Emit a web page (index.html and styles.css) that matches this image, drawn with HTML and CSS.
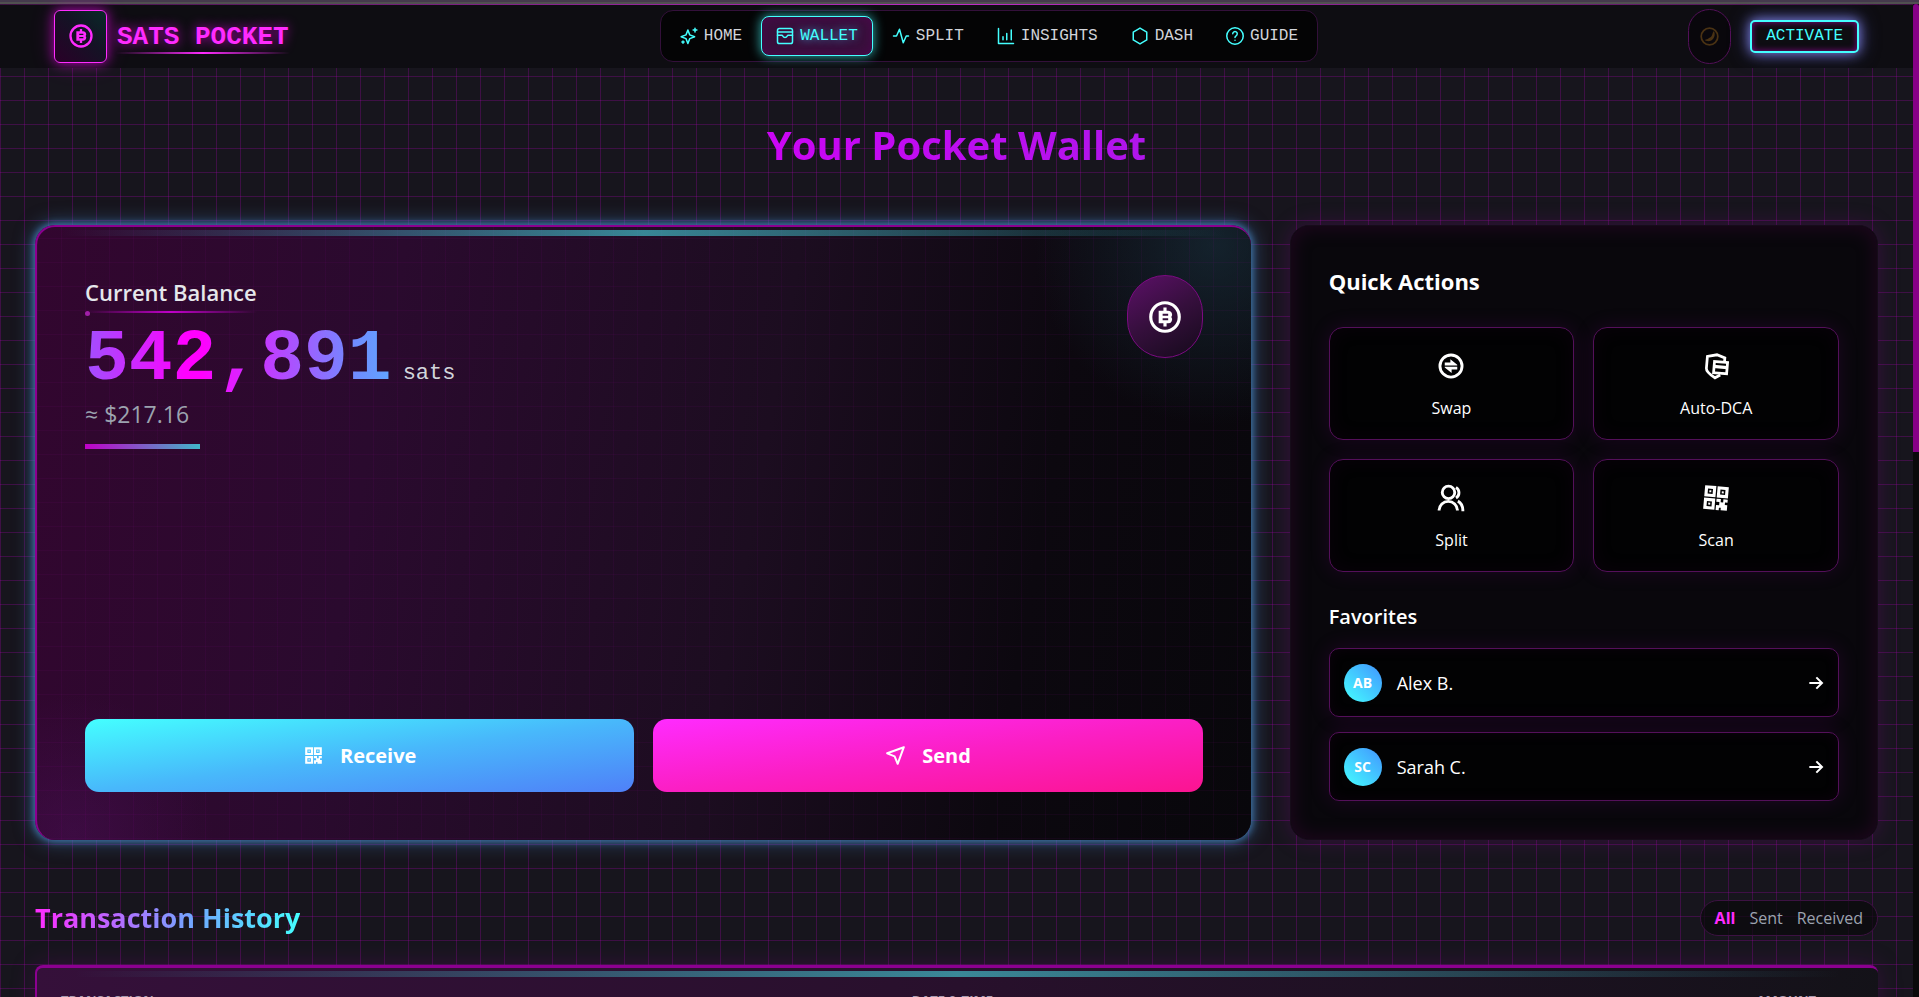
FILE: index.html
```html
<!DOCTYPE html>
<html lang="en">
<head>
<meta charset="utf-8">
<title>Sats Pocket – Wallet</title>
<link rel="stylesheet" href="styles.css">
</head>
<body>
<svg class="defs" aria-hidden="true">
  <symbol id="i-bitcoin" viewBox="0 0 24 24"><path fill="currentColor" d="M12 22a10 10 0 1 1 0-20 10 10 0 0 1 0 20zm0-2a8 8 0 1 0 0-16 8 8 0 0 0 0 16zM8 8h3V6h2v2h1a2.500 2.500 0 0 1 2 4 2.500 2.500 0 0 1-2 4h-1v2h-2v-2H8zm2.500 2v1.200H14V10zm0 2.800V14H14v-1.200z"/></symbol>
  <symbol id="i-swap" viewBox="0 0 24 24"><path fill="currentColor" d="M12 22a10 10 0 1 1 0-20 10 10 0 0 1 0 20zm0-2.300a7.700 7.700 0 1 0 0-15.400 7.700 7.700 0 0 0 0 15.400zM7 9.200h4.500V6.500l5.500 4.500v.600H7zm10 5.600h-4.500v2.700L7 13.200V12.600h10z"/></symbol>
  <symbol id="i-shield" viewBox="0 0 24 24"><g fill="none" stroke="currentColor" stroke-width="2.200"><path d="M18.500 8V5L12 3 4.500 5v9.500c0 2 3 4.500 7.500 7l4-2.600"/><path d="M10.500 8.500H21v9H10.500z"/><path stroke-width="2.500" d="M10 12.500h11"/></g></symbol>
  <symbol id="i-users" viewBox="0 0 24 24"><g fill="none" stroke="currentColor" stroke-width="2.300"><circle cx="10" cy="7.500" r="5"/><path d="M2.500 22a7.300 7.300 0 0 1 14.600 0M16 3.500a5 5 0 0 1 0 8.500M17.500 14.500c2.800 1.500 4 4 4 8"/></g></symbol>
  <symbol id="i-qr" viewBox="0 0 24 24"><path fill="currentColor" fill-rule="evenodd" d="M2.500 2.500h9v9h-9zm2.500 2.500V9H9V5zM12.500 2.500h9v9h-9zM15 5V9h4V5zM2.500 12.500h9v9h-9zM5 15v4h4v-4zM6.200 6.200H7.800V7.800H6.200zM16.200 6.200h1.600V7.800h-1.600zM6.200 16.200H7.800v1.600H6.200zM12.500 12.500H16V15h2v-2.500h3.500V15h-2v2h2v4.500h-5v-2h-1.500v2h-2.500v-4H15V15h-2.500z"/></symbol>
  <symbol id="i-send" viewBox="0 0 24 24"><path fill="none" stroke="currentColor" stroke-width="2.300" stroke-linejoin="round" d="M21.500 2.500 2.500 9.500l8.500 3.500 3.500 8.500z"/></symbol>
  <symbol id="i-arrow" viewBox="0 0 24 24"><path fill="none" stroke="currentColor" stroke-width="3" d="M2 12h19M12.500 3.500 21 12l-8.500 8.500"/></symbol>
</svg>
<div class="topstrip"></div>
<header class="header">
  <a class="brand" href="#">
    <span class="brand-box"><svg><use href="#i-bitcoin"/></svg></span>
    <span class="brand-name">SATS POCKET</span>
  </a>
  <nav class="nav">
    <a href="#"><svg viewBox="0 0 24 24"><path d="M10.500 4 13 10.500l6.500 2.500-6.500 2.500L10.500 22 8 15.500 1.500 13 8 10.500zM20 1.500v5M17.500 4h5M4 18.500v3M2.500 20h3"/></svg>HOME</a>
    <a href="#" class="active"><svg viewBox="0 0 24 24"><rect x="2" y="2" width="20" height="20" rx="2.500"/><path d="M2 6.500h20M2 11h6c1 0 1 3 4 3s3-3 4-3h6"/></svg>WALLET</a>
    <a href="#"><svg viewBox="0 0 24 24"><path d="M2 12h4L10 3l5 18 4-9h3"/></svg>SPLIT</a>
    <a href="#"><svg viewBox="0 0 24 24"><path d="M2 2v20h20M8 17v-4M13 17V8.500M19 17V4"/></svg>INSIGHTS</a>
    <a href="#"><svg viewBox="0 0 24 24"><path d="m12 1.500 9 5.200v10.600l-9 5.200-9-5.200V6.700z"/></svg>DASH</a>
    <a href="#"><svg viewBox="0 0 24 24"><circle cx="12" cy="12" r="11"/><path d="M9 9a3 3 0 1 1 4.500 2.700c-1 .6-1.500 1-1.500 2.300M12 17.500v.300"/></svg>GUIDE</a>
  </nav>
  <div class="tools">
    <button class="theme" aria-label="Toggle theme"><svg viewBox="0 0 24 24"><circle cx="12" cy="12" r="10.500" fill="none" stroke="currentColor" stroke-width="2.200"/><path fill="currentColor" d="M18 6c2.500 7-3.500 14-10.500 11.500-1.500-.600-1.200-1.500 0-1.700 2.500-.300 3-1.800 4.500-2.300 2-.700 3-2 3.500-4 .400-1.600.500-2 1-3 .400-1 1.100-1.400 1.500-.5z"/></svg></button>
    <button class="activate">ACTIVATE</button>
  </div>
</header>
<main class="main">
  <h1>Your Pocket Wallet</h1>
  <div class="grid">
    <section class="balance">
      <div class="balance-top">
        <div>
          <h2 class="label">Current Balance</h2>
          <p class="amount"><strong>542,891</strong><span>sats</span></p>
          <p class="fiat">≈ $217.16</p>
        </div>
        <span class="coin"><svg><use href="#i-bitcoin"/></svg></span>
      </div>
      <div class="cta">
        <button class="receive"><svg><use href="#i-qr"/></svg>Receive</button>
        <button class="send"><svg><use href="#i-send"/></svg>Send</button>
      </div>
    </section>
    <aside class="side">
      <h2>Quick Actions</h2>
      <div class="tiles">
        <button><svg><use href="#i-swap"/></svg>Swap</button>
        <button class="tilt"><svg><use href="#i-shield"/></svg>Auto-DCA</button>
        <button><svg><use href="#i-users"/></svg>Split</button>
        <button class="tilt"><svg><use href="#i-qr"/></svg>Scan</button>
      </div>
      <h3>Favorites</h3>
      <div class="favs">
        <button><span class="avatar">AB</span><span class="who">Alex B.</span><svg><use href="#i-arrow"/></svg></button>
        <button><span class="avatar">SC</span><span class="who">Sarah C.</span><svg><use href="#i-arrow"/></svg></button>
      </div>
    </aside>
  </div>
  <div class="history-head">
    <h2>Transaction History</h2>
    <div class="filter"><button class="on">All</button><button>Sent</button><button>Received</button></div>
  </div>
  <div class="history">
    <table>
      <thead><tr><th>TRANSACTION</th><th>DATE &amp; TIME</th><th>AMOUNT</th></tr></thead>
    </table>
  </div>
</main>
<div class="scroll"></div>
</body>
</html>
```
FILE: styles.css
```css
* { box-sizing: border-box; }
html { background: #17151d; overflow: hidden; }
body {
  position: relative;
  margin: 0;
  height: 100vh;
  overflow: hidden;
  color: #fff;
  font-family: "Open Sans", "Noto Sans", sans-serif;
  background:
    linear-gradient(90deg, rgba(176, 0, 186, .26) 1px, transparent 1px) 0 4px / 24px 24px,
    linear-gradient(rgba(176, 0, 186, .26) 1px, transparent 1px) 0 4px / 24px 24px,
    #17151d;
}
h1, h2, h3, p { margin: 0; }
button { font: inherit; color: inherit; border: 0; padding: 0; background: none; cursor: pointer; }
a { color: inherit; text-decoration: none; }
.defs { display: none; }
.topstrip { height: 4px; background: linear-gradient(#453a4d 50%, #505050 50%); }

.header {
  position: relative;
  height: 64px;
  padding: 0 60px 0 54px;
  display: flex;
  justify-content: space-between;
  align-items: center;
  background: #0e0d12;
}
.header::before {
  content: "";
  position: absolute;
  inset: 0 6px auto 0;
  height: 1px;
  background: linear-gradient(90deg, #3c1240, #c02cc8, #3c1240);
}
.brand { display: flex; align-items: center; gap: 9px; }
.brand-box {
  width: 53px;
  height: 53px;
  display: grid;
  place-items: center;
  border: 1px solid #ff2bff;
  border-radius: 6px;
  color: #ff2bff;
  background: linear-gradient(45deg, #2a0028, #151225 55%, #082a28);
  box-shadow: 0 0 12px rgba(255, 0, 255, .6), 0 0 24px rgba(255, 0, 255, .2);
}
.brand-box svg { width: 28px; height: 30px; }
.brand-name {
  position: relative;
  padding: 2px 1px 0;
  font: 700 26px/34px "Liberation Mono", monospace;
  color: #ff2bff;
  text-shadow: 0 0 12px rgba(255, 0, 255, .7);
}
.brand-name::after {
  content: "";
  position: absolute;
  left: 0; right: 0; bottom: 0;
  height: 2px;
  background: linear-gradient(90deg, transparent, #ff2bff, transparent);
}
.nav {
  height: 52px;
  padding: 0 5px;
  display: flex;
  align-items: center;
  gap: 5px;
  border: 1px solid #33103a;
  border-radius: 13px;
  background: #040405;
}
.nav a {
  height: 40px;
  padding: 0 14px;
  display: flex;
  align-items: center;
  gap: 6px;
  font: 16px "Liberation Mono", monospace;
  color: #d2d4da;
}
.nav svg { width: 18px; height: 18px; fill: none; stroke: #4ff; stroke-width: 2; stroke-linecap: round; stroke-linejoin: round; }
.nav .active {
  color: #4ff;
  border: 1px solid #4ff;
  border-radius: 8px;
  background: #380f3b;
  box-shadow: 0 0 12px rgba(68, 255, 255, .7), inset 0 0 12px rgba(90, 0, 90, .6);
  text-shadow: 0 0 8px rgba(68, 200, 255, .8);
}
.tools { display: flex; justify-content: flex-end; align-items: center; gap: 19px; }
.theme {
  width: 43px;
  height: 55px;
  display: grid;
  place-items: center;
  border: 1px solid #521058;
  border-radius: 22px;
  background: #09070c;
  color: #4a3213;
}
.theme svg { width: 19px; height: 19px; }
.activate {
  height: 33px;
  padding: 0 14px;
  border: 2px solid #4ff;
  border-radius: 5px;
  font: 16px "Liberation Mono", monospace;
  color: #4ff;
  background: #0e0d12;
  box-shadow: 0 0 12px #7a80e0, 0 0 20px rgba(110, 110, 230, .5), inset 0 0 6px rgba(255, 0, 255, .5);
}

.main { padding: 0 41px 0 35px; }
h1 {
  padding: 49px 0 52px;
  text-align: center;
  font-size: 40px;
  line-height: 56px;
  font-weight: 700;
  background: linear-gradient(90deg, #f0f 0, #d400f8 33%, #a81ae8 66%, #7a30e0);
  background-clip: text;
  -webkit-background-clip: text;
  color: transparent;
}
.grid { display: grid; grid-template-columns: repeat(3, minmax(0, 1fr)); gap: 39px; }
.balance {
  grid-column: span 2;
  position: relative;
  display: flex;
  flex-direction: column;
  justify-content: space-between;
  padding: 48px;
  border-top: 2px solid #8c0090;
  border-left: 2px solid #8c0090;
  border-radius: 20px;
  background:
    linear-gradient(90deg, rgba(176, 0, 186, .06) 1px, transparent 1px) 0 0 / 24px 24px,
    linear-gradient(rgba(176, 0, 186, .06) 1px, transparent 1px) 0 11px / 24px 24px,
    radial-gradient(circle at 97% 3%, rgba(30, 60, 75, .5), transparent 180px),
    radial-gradient(circle at 3% 99%, rgba(90, 20, 110, .3), transparent 140px),
    linear-gradient(100deg, #32062f, #2a0a2e 28%, #1c0d20 58%, #0c080f 80%, #08070b);
  box-shadow: 0 0 6px 2px rgba(68, 130, 190, .7), 0 0 18px 3px rgba(68, 130, 190, .5);
}
.balance::before, .history::before {
  content: "";
  position: absolute;
  inset: 3px 0 auto 0;
  height: 6px;
  background: linear-gradient(90deg, transparent 2%, rgba(68, 200, 210, .65) 50%, transparent 98%);
}
.balance-top { display: flex; justify-content: space-between; align-items: flex-start; }
.label {
  position: relative;
  width: max-content;
  padding-bottom: 4px;
  font-size: 22px;
  line-height: 34px;
  font-weight: 600;
  color: #e5e7eb;
}
.label::after {
  content: "";
  position: absolute;
  left: 0; right: 0; bottom: 0;
  height: 2px;
  background: linear-gradient(90deg, transparent, #c000c8, transparent);
}
.label::before {
  content: "";
  position: absolute;
  left: 0; bottom: -3px;
  width: 5px; height: 5px;
  border-radius: 50%;
  background: #a020a8;
}
.amount { margin-top: 24px; font: 22px/46px "Liberation Mono", monospace; color: #d1d5db; }
.amount strong {
  font-size: 73px;
  line-height: 46px;
  background: linear-gradient(90deg, #a050ff 0, #f0f 33%, #f0f 38%, #6f8cff 88%, #60a5ff);
  background-clip: text;
  -webkit-background-clip: text;
  color: transparent;
}
.amount span { margin-left: 11px; }
.fiat { position: relative; width: max-content; font-size: 23px; line-height: 34px; color: #9ca3af; padding-bottom: 18px; }
.fiat::after {
  content: "";
  position: absolute;
  left: 0; bottom: 0;
  width: 115px; height: 5px;
  background: linear-gradient(90deg, #c000c8, #40b8c8);
}
.coin {
  width: 76px;
  height: 83px;
  display: grid;
  place-items: center;
  border: 1px solid #7c0a82;
  border-radius: 38px;
  background: linear-gradient(150deg, #5c1068, #350f3c 50%, #140a1a);
}
.coin svg { width: 38px; height: 38px; }
.cta { display: grid; grid-template-columns: 1fr 1fr; gap: 19px; }
.cta button {
  height: 73px;
  display: flex;
  align-items: center;
  justify-content: center;
  gap: 16px;
  border-radius: 14px;
  font-size: 20px;
  font-weight: 700;
}
.cta svg { width: 21px; height: 21px; }
.receive { background: linear-gradient(to bottom right, #4ff, #48b8fb 50%, #4f80f8); }
.send { background: linear-gradient(to bottom right, #ff2bff, #fb1fc4 50%, #fb1490); }

.side {
  padding: 38px;
  border: 1px solid #160c19;
  border-radius: 19px;
  background: #09070c;
  box-shadow: 0 0 22px rgba(140, 0, 150, .28), inset 0 0 20px rgba(110, 0, 100, .25);
}
.side h2 { font-size: 22px; line-height: 34px; font-weight: 700; }
.side h3 { margin: 29px 0 15px; font-size: 20px; line-height: 32px; font-weight: 600; }
.tiles { margin-top: 29px; display: grid; grid-template-columns: 1fr 1fr; gap: 19px; }
.tiles button {
  height: 113px;
  padding-top: 4px;
  display: flex;
  flex-direction: column;
  align-items: center;
  justify-content: center;
  gap: 15px;
  font-size: 16px;
  line-height: 24px;
  border: 1px solid #54105a;
  border-radius: 14px;
  background: #020203;
  box-shadow: 0 0 20px rgba(130, 0, 140, .16), inset 0 0 20px rgba(90, 0, 90, .1);
}
.tiles svg { width: 30px; height: 30px; }
.tilt svg { transform: rotate(5deg); }
.favs { display: grid; gap: 15px; }
.favs button {
  height: 69px;
  padding: 0 14px;
  display: flex;
  align-items: center;
  gap: 15px;
  font-size: 18px;
  border: 1px solid #54105a;
  border-radius: 10px;
  background: #020203;
  box-shadow: 0 0 20px rgba(130, 0, 140, .18), inset 0 0 14px rgba(90, 0, 90, .12);
}
.avatar {
  width: 38px;
  height: 38px;
  display: grid;
  place-items: center;
  border-radius: 50%;
  font-size: 14px;
  font-weight: 700;
  background: linear-gradient(45deg, #4ff, #4294ff);
}
.who { flex: 1; text-align: left; }
.favs svg { width: 16px; height: 16px; }

.history-head { margin: 58px 0 27px; display: flex; justify-content: space-between; align-items: center; }
.history-head h2 {
  font-size: 27px;
  line-height: 40px;
  font-weight: 700;
  background: linear-gradient(90deg, #ff2bff, #70a8ff 60%, #4ff);
  background-clip: text;
  -webkit-background-clip: text;
  color: transparent;
}
.filter {
  height: 36px;
  padding: 0 14px;
  display: flex;
  align-items: center;
  gap: 14px;
  border: 1px solid #3c1242;
  border-radius: 18px;
  background: rgba(10, 8, 12, .7);
  font-size: 16px;
  color: #9ca3af;
}
.filter .on { font-weight: 700; color: #ff2bff; }
.history {
  position: relative;
  padding: 22px 24px;
  border-top: 3px solid #8c0090;
  border-left: 2px solid #8c0090;
  border-radius: 8px;
  background: linear-gradient(100deg, #35103a, #28102c 50%, #131218);
  box-shadow: 0 0 24px rgba(140, 0, 150, .25);
}
table { width: 100%; border-collapse: collapse; table-layout: fixed; }
th { padding: 0; font-size: 13px; line-height: 20px; font-weight: 700; text-align: left; color: #a79bb0; }
th:nth-child(1) { width: 47%; }
th:nth-child(2) { padding-left: 8px; }
th:last-child { text-align: right; padding-right: 38px; }
.scroll {
  position: absolute;
  right: 0; top: 4px; bottom: 0;
  width: 6px;
  background: linear-gradient(#860086 448px, #0a0a0a 448px);
  border-radius: 3px 3px 0 0;
}
```
